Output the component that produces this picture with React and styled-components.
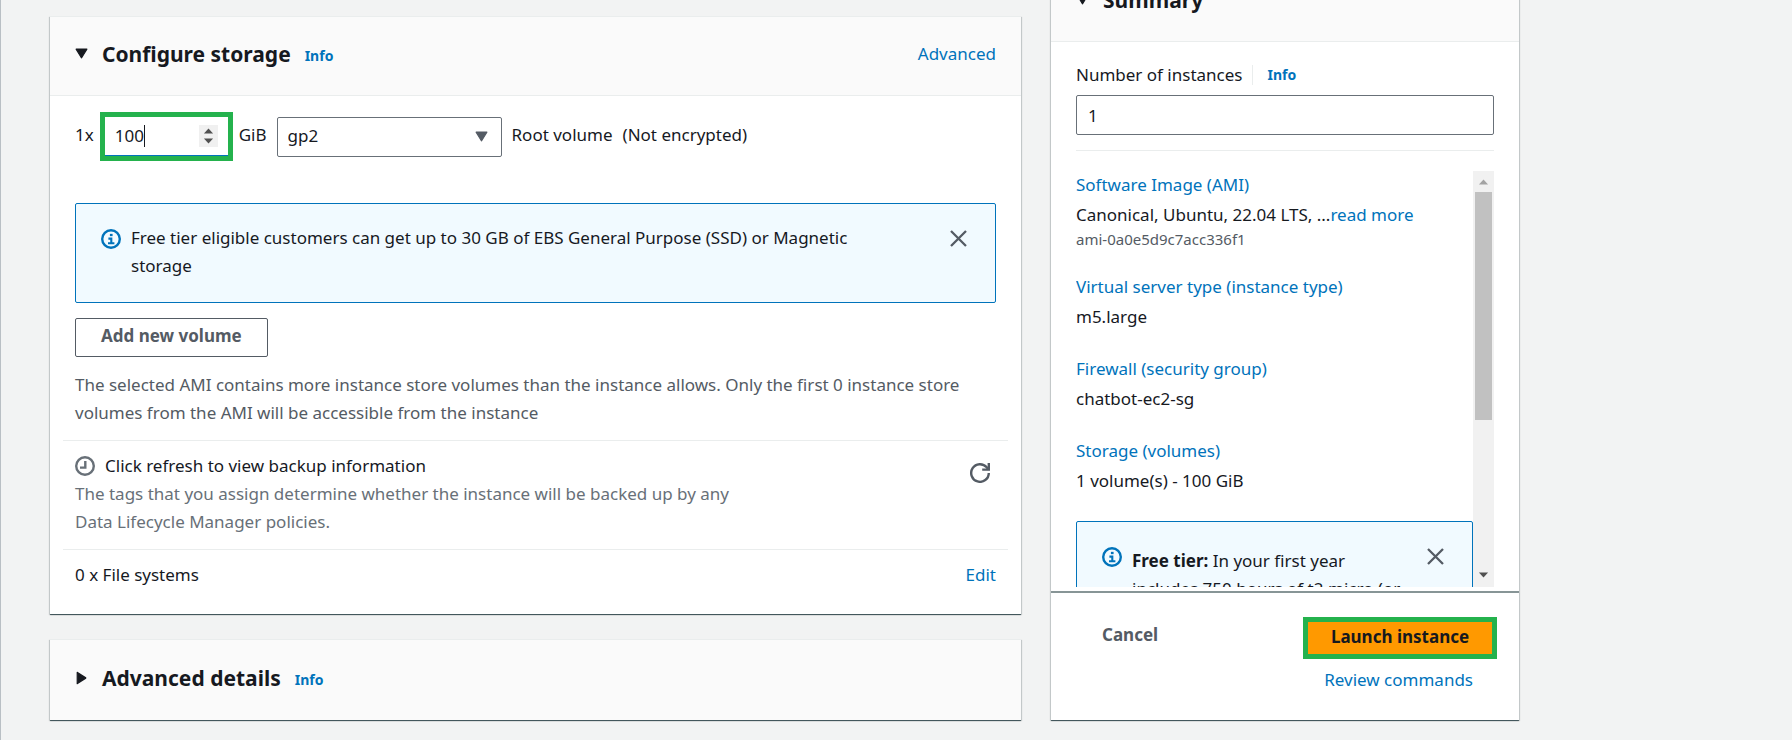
import React from "react";
import styled, { createGlobalStyle } from "styled-components";

const GlobalStyle = createGlobalStyle`
  *, *::before, *::after { box-sizing: border-box; }
  body {
    margin: 0;
    background: #f2f3f3;
    color: #16191f;
    font-family: "Noto Sans", "Open Sans", sans-serif;
    font-size: 17px;
    line-height: 28px;
  }
  input, select, button { font: inherit; color: inherit; }
  h2, p, dl, dt, dd { margin: 0; }
`;

const Page = styled.div`
  display: grid;
  grid-template-columns: 971fr 468fr;
  align-items: start;
  gap: 30px;
  min-height: 100vh;
  overflow: hidden;
  padding: 16px 273px 20px 49px;
  border-left: 1px solid #b9bfc4;
`;

const Main = styled.main`
  display: grid;
  gap: 25px;
  min-width: 0;
`;

const Panel = styled.section`
  min-width: 0;
  background: #fff;
  border-top: 1px solid #eaeded;
  box-shadow: 0 1px 1px 0 rgba(0, 28, 36, 0.3), 1px 1px 1px 0 rgba(0, 28, 36, 0.15),
    -1px 1px 1px 0 rgba(0, 28, 36, 0.15), 0 1px 0 0 #879596;
`;

const SummaryColumn = styled.aside`
  margin-top: -54px;
  min-width: 0;
`;

const PanelHeader = styled.header`
  display: flex;
  align-items: center;
  height: ${(p) => (p.$divided ? "79px" : "80px")};
  padding: 0 25px 5px;
  background: #fafafa;
  border-bottom: ${(p) => (p.$divided ? "1px solid #eaeded" : "0")};
`;

const Toggle = styled.button`
  display: flex;
  align-items: center;
  gap: 14px;
  padding: 0;
  border: 0;
  background: none;
`;

const Title = styled.h2`
  font-size: 21px;
  font-weight: 700;
  white-space: nowrap;
`;

const Link = styled.a`
  color: #0073bb;
  text-decoration: none;
`;

const InfoLink = styled(Link)`
  margin-left: 14px;
  font-size: 14px;
  font-weight: 700;
  line-height: 20px;
`;

const HeaderInfo = styled(InfoLink)`
  padding-top: 4px;
`;

const PushedLink = styled(Link)`
  margin-left: auto;
`;

const StorageBody = styled.div`
  padding: 16px 25px 25px;
`;

const VolumeRow = styled.div`
  display: flex;
  align-items: center;
  gap: 10px;
  margin-bottom: 42px;
  white-space: nowrap;
`;

const RowText = styled.span`
  padding-bottom: 4px;
`;

const SizeGroup = styled.label`
  display: flex;
  align-items: center;
  gap: 6px;
`;

const Highlight = styled.div`
  border: 5px solid #24b24d;
`;

const SizeBox = styled(Highlight)`
  width: 133px;
`;

const NumberBox = styled.span`
  display: flex;
  align-items: center;
  height: 39px;
  padding: 0 10px;
  background: #fff;
  border-bottom: 1px solid #0073bb;
`;

const SizeInput = styled.input`
  field-sizing: content;
  padding: 0;
  border: 0;
  outline: 0;
  background: none;
  appearance: textfield;
  &::-webkit-inner-spin-button { display: none; }
`;

const Caret = styled.span`
  width: 1px;
  height: 22px;
  background: #16191f;
`;

const Spinner = styled.span`
  display: flex;
  flex-direction: column;
  align-items: center;
  justify-content: center;
  gap: 4px;
  width: 19px;
  height: 22px;
  margin-left: auto;
  background: #f0f0f0;
`;

const SelectBox = styled.div`
  display: grid;
  align-items: center;
  width: 225px;
  > * { grid-area: 1 / 1; }
  > svg { justify-self: end; margin-right: 14px; pointer-events: none; }
`;

const Select = styled.select`
  appearance: none;
  width: 100%;
  height: 40px;
  padding: 0 10px 2px;
  background: #fff;
  border: 1px solid #687078;
  border-radius: 2px;
`;

const Alert = styled.div`
  display: flex;
  align-items: flex-start;
  gap: 10px;
  min-height: 100px;
  padding: ${(p) => (p.$tall ? "25px" : "20px 25px")};
  background: #f1faff;
  border: 1px solid #0073bb;
  border-radius: 2px;
`;

const AlertIcon = styled.span`
  display: flex;
  flex: none;
  padding-top: ${(p) => (p.$tall ? "0" : "5px")};
`;

const AlertText = styled.p`
  flex: 1;
  min-width: 0;
  padding-right: ${(p) => (p.$tall ? "10px" : "80px")};
`;

const IconButton = styled.button`
  display: flex;
  flex: none;
  padding: 0;
  border: 0;
  background: none;
  color: #545b64;
`;

const AlertClose = styled(IconButton)`
  padding: ${(p) => (p.$tall ? "1px 3px" : "6px 3px")};
`;

const Button = styled.button`
  height: 39px;
  padding: 0 25px 3px;
  background: #fff;
  border: 1px solid #545b64;
  border-radius: 2px;
  color: #545b64;
  font-weight: 700;
  line-height: 28px;
  white-space: nowrap;
`;

const AddButton = styled(Button)`
  display: block;
  margin: 15px 0 14px;
`;

const CancelButton = styled(Button)`
  border-color: transparent;
`;

const LaunchButton = styled(Button)`
  display: block;
  width: 100%;
  height: 32px;
  padding: 0 0 3px;
  background: #ff9900;
  border: 0;
  border-radius: 0;
  color: #16191f;
`;

const Note = styled.p`
  max-width: 890px;
  color: ${(p) => (p.$light ? "#687078" : "#545b64")};
`;

const Divider = styled.hr`
  height: 1px;
  margin: ${(p) => (p.$wide ? "13px -12px 11px" : "15px 0 20px")};
  border: 0;
  background: #eaeded;
`;

const SplitRow = styled.div`
  display: flex;
  align-items: flex-start;
  justify-content: space-between;
`;

const BackupText = styled.div`
  max-width: 670px;
`;

const BackupTitle = styled.p`
  display: flex;
  align-items: center;
  gap: 10px;
`;

const Refresh = styled(IconButton)`
  padding: 11px 6px;
`;

const SummaryBody = styled.div`
  padding: 19px 25px 4px;
`;

const LabelRow = styled.div`
  display: flex;
  align-items: center;
  margin-bottom: 6px;
`;

const LabelSeparator = styled.span`
  width: 1px;
  height: 20px;
  margin-left: 10px;
  background: #eaeded;
`;

const TextInput = styled.input`
  display: block;
  width: 100%;
  height: 40px;
  padding: 0 11px;
  background: #fff;
  border: 1px solid #687078;
  border-radius: 2px;
`;

const ScrollArea = styled.div`
  display: flex;
  height: 416px;
`;

const ScrollContent = styled.div`
  flex: 1;
  min-width: 0;
  overflow: hidden;
`;

const Track = styled.div`
  display: flex;
  flex-direction: column;
  align-items: center;
  width: 21px;
  background: #f1f1f1;
`;

const TrackEnd = styled.span`
  display: flex;
  align-items: center;
  justify-content: center;
  height: ${(p) => (p.$last ? "24px" : "21px")};
  margin-top: ${(p) => (p.$last ? "auto" : "0")};
`;

const Thumb = styled.span`
  width: 17px;
  height: 228px;
  background: #c1c1c1;
`;

const Facts = styled.dl`
  display: grid;
  gap: 24px;
  margin-bottom: 26px;
`;

const Fact = styled.div`
  dt { margin-bottom: 2px; }
`;

const FactNote = styled.dd`
  color: #545b64;
  font-size: 15px;
  line-height: 20px;
`;

const SummaryFooter = styled.footer`
  display: flex;
  align-items: flex-start;
  justify-content: space-between;
  height: 129px;
  padding: 24px 22px 25px 25px;
  border-top: 2px solid #879596;
`;

const LaunchGroup = styled.div`
  display: grid;
  gap: 7px;
  width: 194px;
  text-align: right;
  > a { padding-right: 24px; white-space: nowrap; }
`;

function Triangle({ direction, width, height, color = "#16191f", round = true }) {
  const shapes = {
    down: "1,1 11,1 6,9",
    up: "1,9 11,9 6,1",
    right: "2,1 10,5 2,9",
  };
  return (
    <svg width={width} height={height} viewBox="0 0 12 10" preserveAspectRatio="none" aria-hidden="true">
      <polygon
        points={shapes[direction]}
        fill={color}
        stroke={color}
        strokeWidth={round ? 1 : 0}
        strokeLinejoin="round"
      />
    </svg>
  );
}

const InfoIcon = () => (
  <svg width="20" height="20" viewBox="0 0 20 20" fill="none" stroke="#0073bb" strokeWidth="2.4" aria-hidden="true">
    <circle cx="10" cy="10" r="8.8" />
    <path d="M7 14.2h6.4M7.4 9.6h2.9v4.6" strokeWidth="2.1" />
    <path d="M8.9 6h2.7" strokeWidth="2.3" />
  </svg>
);

const CloseIcon = () => (
  <svg width="17" height="17" viewBox="0 0 17 17" fill="none" stroke="currentColor" strokeWidth="2.3" aria-hidden="true">
    <path d="M1 1l15 15M16 1L1 16" />
  </svg>
);

const ClockIcon = () => (
  <svg width="20" height="20" viewBox="0 0 20 20" fill="none" stroke="#687078" strokeWidth="2.4" aria-hidden="true">
    <circle cx="10" cy="10" r="8.8" />
    <path d="M10.3 5v6.6H5" />
  </svg>
);

const RefreshIcon = () => (
  <svg width="20" height="20" viewBox="0 0 20 20" fill="none" stroke="currentColor" strokeWidth="2.4" aria-hidden="true">
    <path d="M18.8 10A8.8 8.8 0 1 1 16.7 4.3L18.4 6.4" />
    <path d="M18.8 0v6.6h-6.6" />
  </svg>
);

const facts = [
  {
    name: "Software Image (AMI)",
    value: (
      <>
        Canonical, Ubuntu, 22.04 LTS, ...<Link href="#ami">read more</Link>
      </>
    ),
    note: "ami-0a0e5d9c7acc336f1",
  },
  { name: "Virtual server type (instance type)", value: "m5.large" },
  { name: "Firewall (security group)", value: "chatbot-ec2-sg" },
  { name: "Storage (volumes)", value: "1 volume(s) - 100 GiB" },
];

function ConfigureStorage() {
  return (
    <Panel>
      <PanelHeader $divided>
        <Toggle aria-expanded="true">
          <Triangle direction="down" width={13} height={11} />
          <Title>Configure storage</Title>
        </Toggle>
        <HeaderInfo href="#storage-info">Info</HeaderInfo>
        <PushedLink href="#advanced">Advanced</PushedLink>
      </PanelHeader>
      <StorageBody>
        <VolumeRow>
          <SizeGroup>
            <RowText>1x</RowText>
            <SizeBox>
              <NumberBox>
                <SizeInput type="number" defaultValue="100" aria-label="Volume size in GiB" />
                <Caret />
                <Spinner>
                  <Triangle direction="up" width={11} height={6} color="#505050" round={false} />
                  <Triangle direction="down" width={11} height={6} color="#505050" round={false} />
                </Spinner>
              </NumberBox>
            </SizeBox>
            <RowText>GiB</RowText>
          </SizeGroup>
          <SelectBox>
            <Select aria-label="Volume type" defaultValue="gp2">
              <option>gp2</option>
            </Select>
            <Triangle direction="down" width={13} height={11} color="#545b64" />
          </SelectBox>
          <RowText>Root volume</RowText>
          <RowText>(Not encrypted)</RowText>
        </VolumeRow>
        <Alert>
          <AlertIcon><InfoIcon /></AlertIcon>
          <AlertText>
            Free tier eligible customers can get up to 30 GB of EBS General Purpose (SSD) or Magnetic storage
          </AlertText>
          <AlertClose aria-label="Dismiss"><CloseIcon /></AlertClose>
        </Alert>
        <AddButton>Add new volume</AddButton>
        <Note>
          The selected AMI contains more instance store volumes than the instance allows. Only the first 0 instance
          store volumes from the AMI will be accessible from the instance
        </Note>
        <Divider $wide />
        <SplitRow>
          <BackupText>
            <BackupTitle><ClockIcon />Click refresh to view backup information</BackupTitle>
            <Note $light>
              The tags that you assign determine whether the instance will be backed up by any Data Lifecycle Manager
              policies.
            </Note>
          </BackupText>
          <Refresh aria-label="Refresh"><RefreshIcon /></Refresh>
        </SplitRow>
        <Divider $wide />
        <SplitRow>
          <span>0 x File systems</span>
          <Link href="#file-systems">Edit</Link>
        </SplitRow>
      </StorageBody>
    </Panel>
  );
}

function Summary() {
  return (
    <SummaryColumn>
      <Panel>
        <PanelHeader $divided>
          <Toggle aria-expanded="true">
            <Triangle direction="down" width={13} height={11} />
            <Title>Summary</Title>
          </Toggle>
        </PanelHeader>
        <SummaryBody>
          <LabelRow>
            <label htmlFor="instances">Number of instances</label>
            <LabelSeparator />
            <InfoLink href="#instances-info">Info</InfoLink>
          </LabelRow>
          <TextInput id="instances" type="text" inputMode="numeric" defaultValue="1" />
          <Divider />
          <ScrollArea>
            <ScrollContent>
              <Facts>
                {facts.map((fact) => (
                  <Fact key={fact.name}>
                    <dt><Link href="#section">{fact.name}</Link></dt>
                    <dd>{fact.value}</dd>
                    {fact.note && <FactNote>{fact.note}</FactNote>}
                  </Fact>
                ))}
              </Facts>
              <Alert $tall>
                <AlertIcon $tall><InfoIcon /></AlertIcon>
                <AlertText $tall>
                  <b>Free tier:</b> In your first year
                  <br />
                  includes 750 hours of t2.micro (or
                </AlertText>
                <AlertClose $tall aria-label="Dismiss"><CloseIcon /></AlertClose>
              </Alert>
            </ScrollContent>
            <Track aria-hidden="true">
              <TrackEnd><Triangle direction="up" width={11} height={6} color="#a3a3a3" round={false} /></TrackEnd>
              <Thumb />
              <TrackEnd $last><Triangle direction="down" width={11} height={6} color="#505050" round={false} /></TrackEnd>
            </Track>
          </ScrollArea>
        </SummaryBody>
        <SummaryFooter>
          <CancelButton>Cancel</CancelButton>
          <LaunchGroup>
            <Highlight><LaunchButton>Launch instance</LaunchButton></Highlight>
            <Link href="#review">Review commands</Link>
          </LaunchGroup>
        </SummaryFooter>
      </Panel>
    </SummaryColumn>
  );
}

export default function App() {
  return (
    <>
      <GlobalStyle />
      <Page>
        <Main>
          <ConfigureStorage />
          <Panel>
            <PanelHeader>
              <Toggle aria-expanded="false">
                <Triangle direction="right" width={13} height={14} />
                <Title>Advanced details</Title>
              </Toggle>
              <HeaderInfo href="#details-info">Info</HeaderInfo>
            </PanelHeader>
          </Panel>
        </Main>
        <Summary />
      </Page>
    </>
  );
}
